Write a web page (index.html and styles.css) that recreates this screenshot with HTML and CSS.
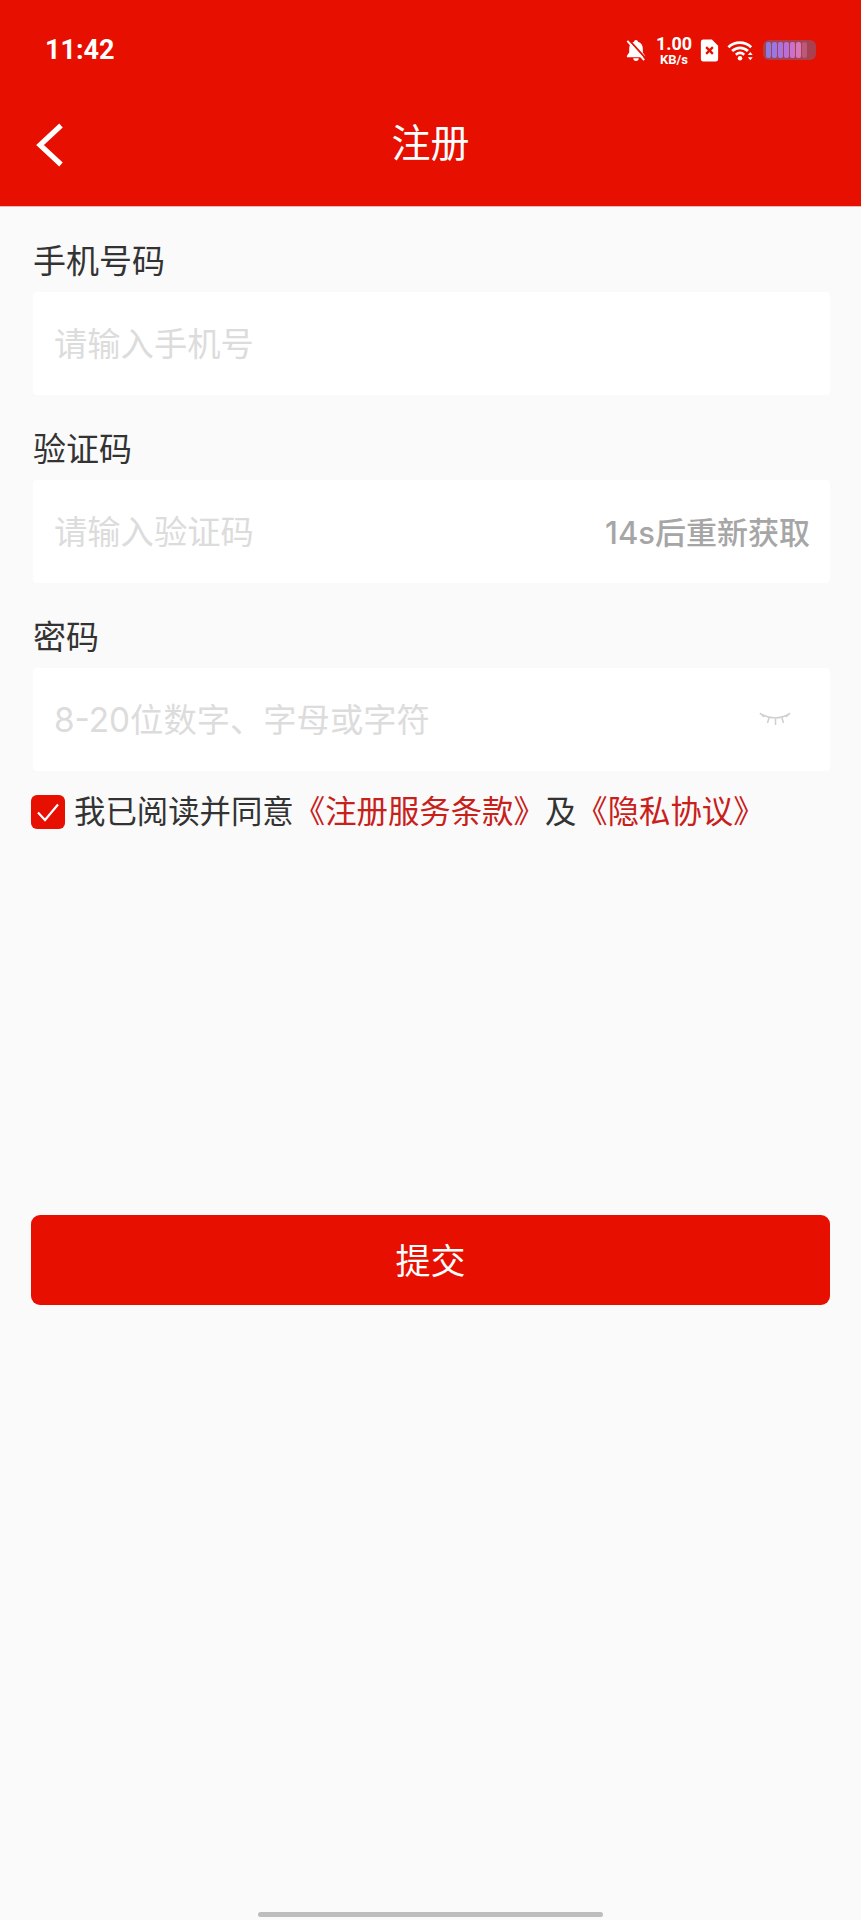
FILE: index.html
```html
<!DOCTYPE html>
<html lang="zh-CN">
<head>
<meta charset="utf-8">
<title>注册</title>
<link rel="stylesheet" href="styles.css">
</head>
<body>
<div class="page">
  <header class="header">
    <div class="status">
      <span class="time">11:42</span>
      <div class="status-icons">
        <svg class="i-bell" viewBox="0 0 22 24" width="20" height="23"><path d="M11 .5c-1.200 0-2 .8-2.100 1.900C5.200 3.400 3.500 6.400 3.500 9.800v4.400L1 17.800v1.700h20v-1.700l-2.500-3.600V9.800c0-3.400-1.700-6.400-5.400-7.400C13 1.300 12.200.5 11 .5zM8 20.500a3 3 0 0 0 6 0z" fill="#fff"/><path d="M3 0 22 21" stroke="#e60f00" stroke-width="2"/><path d="M1.500 1.500 20 22.500" stroke="#fff" stroke-width="2.200"/></svg>
        <div class="speed"><span class="speed-n">1.00</span><span class="speed-u">KB/s</span></div>
        <svg class="i-sim" viewBox="0 0 19 24" width="19" height="23"><path d="M3 0.500h9l6.500 6.500v14a2.500 2.500 0 0 1-2.500 2.500H3A2.500 2.500 0 0 1 .5 21V3A2.500 2.500 0 0 1 3 .5z" fill="#fff"/><path d="M6 8.500l7 7M13 8.500l-7 7" stroke="#e60f00" stroke-width="2.400"/></svg>
        <svg class="i-wifi" viewBox="0 0 29 22" width="27" height="21"><path d="M1.500 7.500C8.500 1 19 1 26 7.500M5.500 11.500c5-4.500 12-4.500 17 0M9.500 15.500c2.800-2.400 6.200-2.400 9 0" fill="none" stroke="#fff" stroke-width="3"/><circle cx="14" cy="19.300" r="2.400" fill="#fff"/><path d="M25 12.500l-2.600 3.200h5.200zM25 21.500l-2.600-3.200h5.200z" fill="#fff"/></svg>
        <div class="battery">
          <span class="cell c1"></span><span class="cell c2"></span><span class="cell c3"></span><span class="cell c4"></span><span class="cell c5"></span><span class="cell c6"></span><span class="cell c7"></span>
        </div>
      </div>
    </div>
    <div class="nav">
      <svg class="back" viewBox="0 0 30 46" width="30" height="46"><path d="M26 3.500 5 23l21 19.500" fill="none" stroke="#fff" stroke-width="5.200"/></svg>
      <h1 class="title">注册</h1>
    </div>
  </header>

  <main class="form">
    <section class="field">
      <div class="label">手机号码</div>
      <div class="box"><span class="ph">请输入手机号</span></div>
    </section>
    <section class="field">
      <div class="label">验证码</div>
      <div class="box"><span class="ph">请输入验证码</span><span class="resend">14s后重新获取</span></div>
    </section>
    <section class="field">
      <div class="label">密码</div>
      <div class="box"><span class="ph">8-20位数字、字母或字符</span>
        <svg class="eye" viewBox="0 0 32 15" width="32" height="15"><path d="M1 1.500c5 3 9 4.500 15 4.500s10-1.500 15-4.500M1 1l4 4M31 1l-4 4M10 6l-1.500 5M16.500 7v6M23 6l1.500 5" fill="none" stroke="#cfcfcf" stroke-width="1.500"/></svg>
      </div>
    </section>
    <div class="agree">
      <span class="check"><svg viewBox="0 0 34 34" width="34" height="34"><path d="M7 17.500l7 7.500L27 9.500" fill="none" stroke="#fff" stroke-width="2.200"/></svg></span>
      <span class="agree-text">我已阅读并同意<a class="link">《注册服务条款》</a>及<a class="link">《隐私协议》</a></span>
    </div>
    <button class="submit" type="button">提交</button>
  </main>
  <div class="home"></div>
</div>
</body>
</html>
```
FILE: styles.css
```css
* { box-sizing: border-box; }
html, body { margin: 0; padding: 0; }
body {
  font-family: "Inter", "Noto Sans CJK SC", "Noto Sans", sans-serif;
  background: #fafafa;
}
.page {
  width: 861px;
  height: 1920px;
  display: flex;
  flex-direction: column;
  position: relative;
  overflow: hidden;
}
.header {
  height: 207px;
  background: #e60f00;
  border-bottom: 1px solid #e9b9b5;
  color: #fff;
  flex: none;
}
.status {
  height: 100px;
  display: flex;
  align-items: center;
  justify-content: space-between;
  padding: 0 45px 0 45px;
}
.time {
  font-family: "Roboto", sans-serif;
  font-weight: 700;
  font-size: 27px;
}
.status-icons {
  display: flex;
  align-items: center;
}
.i-bell { margin-right: 11px; }
.speed {
  display: flex;
  flex-direction: column;
  align-items: center;
  width: 34px;
  font-family: "Roboto", sans-serif;
  font-weight: 700;
  line-height: 1;
  margin-right: 9px;
}
.speed-n { font-size: 18px; }
.speed-u { font-size: 13px; }
.i-sim { margin-right: 8px; }
.i-wifi { margin-right: 9px; }
.battery {
  width: 53px;
  height: 20px;
  border-radius: 6px;
  background: #a8404f;
  display: flex;
  align-items: center;
  gap: 1px;
  padding: 2px 3px;
}
.cell { width: 5px; height: 16px; border-radius: 2px; }
.c1 { background: #8c7ce0; }
.c2 { background: #9a78e4; }
.c3 { background: #a873e0; }
.c4 { background: #b870d8; }
.c5 { background: #c872cc; }
.c6 { background: #d878b8; }
.c7 { background: #b85a78; }
.nav {
  height: 106px;
  display: flex;
  align-items: center;
  justify-content: center;
  position: relative;
  padding-bottom: 22px;
}
.back {
  position: absolute;
  left: 35px;
  top: 22px;
}
.title {
  margin: 0;
  font-size: 39px;
  font-weight: 400;
  line-height: 1;
}
.form {
  padding: 35px 31px 0;
  display: flex;
  flex-direction: column;
}
.label {
  font-size: 33px;
  line-height: 38px;
  height: 50px;
  color: #333;
  padding-left: 2px;
}
.box {
  height: 103px;
  margin: 0 0 35px 2px;
  background: #fff;
  border-radius: 4px;
  display: flex;
  align-items: center;
  justify-content: space-between;
  padding: 2px 20px 0 21px;
}
.ph {
  font-size: 33.300px;
  color: #dcdcdc;
  line-height: 1;
}
.resend {
  font-size: 31px;
  color: #a6a6a6;
  line-height: 1;
  font-weight: 500;
}
.eye { margin-right: 19px; margin-top: -2px; }
.agree {
  display: flex;
  align-items: center;
  margin-top: -19px;
  height: 50px;
}
.check {
  width: 34px;
  height: 34px;
  border-radius: 6px;
  background: #e60f00;
  margin-right: 9px;
  flex: none;
  display: flex;
}
.agree-text {
  font-size: 31.400px;
  line-height: 1;
  color: #333;
  white-space: nowrap;
  padding-top: 2px;
}
.link { color: #c8201a; }
.submit {
  margin-top: 378px;
  height: 90px;
  width: 799px;
  border: 0;
  border-radius: 9px;
  background: #e60f00;
  color: #fff;
  font-family: inherit;
  font-size: 35px;
  padding: 0 0 4px;
}
.home {
  position: absolute;
  left: 258px;
  bottom: 3px;
  width: 345px;
  height: 5px;
  border-radius: 3px;
  background: #bdbdbd;
}
```
